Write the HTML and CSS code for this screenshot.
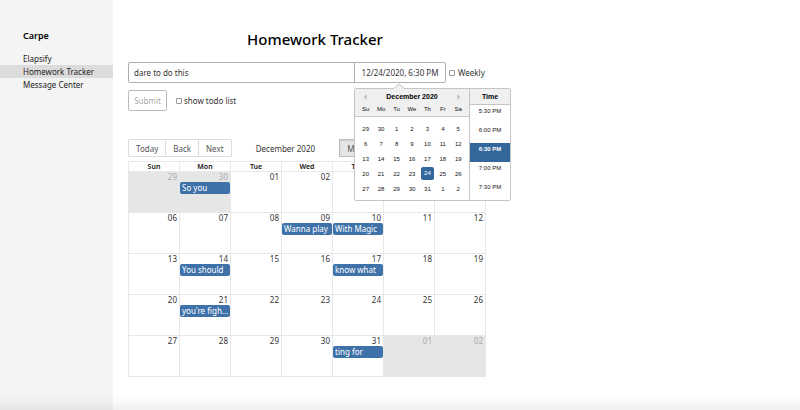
FILE: index.html
```
<!DOCTYPE html>
<html lang="en">
<head>
<meta charset="utf-8">
<meta name="viewport" content="width=device-width, initial-scale=1">
<title>Homework Tracker</title>
<link rel="stylesheet" href="styles.css">
</head>
<body>
<div class="app">
  <nav class="sidebar">
    <h2 class="brand">Carpe</h2>
    <a class="nav-link" href="#elapsify">Elapsify</a>
    <a class="nav-link active" href="#homework">Homework Tracker</a>
    <a class="nav-link" href="#messages">Message Center</a>
  </nav>
  <main class="main">
    <div class="column">
      <h1 class="title">Homework Tracker</h1>
      <form>
        <div class="fields">
          <input class="field task" type="text" aria-label="Assignment" value="dare to do this">
          <div class="date-wrap">
            <input class="field date" type="text" aria-label="Due date" value="12/24/2020, 6:30 PM">
            <div class="picker">
              <svg class="pointer" viewBox="0 0 12 6"><path d="M0 6 6 1l6 5" fill="#f0f0f0" stroke="#c4c4c4"/></svg>
              <div class="picker-days">
                <div class="picker-head">
                  <button type="button" class="arrow" aria-label="Previous month"><svg viewBox="0 0 4 6"><path d="M4 0v6L0 3z" fill="#ccc"/></svg></button>
                  <span class="picker-month">December 2020</span>
                  <button type="button" class="arrow" aria-label="Next month"><svg viewBox="0 0 4 6"><path d="M0 0v6l4-3z" fill="#ccc"/></svg></button>
                </div>
                <table class="days">
                  <thead><tr><th>Su</th><th>Mo</th><th>Tu</th><th>We</th><th>Th</th><th>Fr</th><th>Sa</th></tr></thead>
                  <tbody>
                    <tr><td>29</td><td>30</td><td>1</td><td>2</td><td>3</td><td>4</td><td>5</td></tr>
                    <tr><td>6</td><td>7</td><td>8</td><td>9</td><td>10</td><td>11</td><td>12</td></tr>
                    <tr><td>13</td><td>14</td><td>15</td><td>16</td><td>17</td><td>18</td><td>19</td></tr>
                    <tr><td>20</td><td>21</td><td>22</td><td>23</td><td><span class="chosen">24</span></td><td>25</td><td>26</td></tr>
                    <tr><td>27</td><td>28</td><td>29</td><td>30</td><td>31</td><td>1</td><td>2</td></tr>
                  </tbody>
                </table>
              </div>
              <div class="picker-times">
                <div class="time-head">Time</div>
                <ul class="times">
                  <li>5:30 PM</li>
                  <li>6:00 PM</li>
                  <li class="selected">6:30 PM</li>
                  <li>7:00 PM</li>
                  <li>7:30 PM</li>
                </ul>
              </div>
            </div>
          </div>
          <label class="check weekly"><input type="checkbox">Weekly</label>
        </div>
        <div class="actions">
          <button class="submit" type="submit" disabled>Submit</button>
          <label class="check"><input type="checkbox">show todo list</label>
        </div>
      </form>
      <div class="toolbar">
        <div class="group"><button type="button">Today</button><button type="button">Back</button><button type="button">Next</button></div>
        <span class="month-label">December 2020</span>
        <div class="group views"><button type="button" class="pressed">Month</button></div>
      </div>
      <table class="calendar">
        <thead><tr><th>Sun</th><th>Mon</th><th>Tue</th><th>Wed</th><th>Thu</th><th>Fri</th><th>Sat</th></tr></thead>
        <tbody>
          <tr><td class="off">29</td><td class="off">30<div class="event">So you</div></td><td>01</td><td>02</td><td></td><td></td><td></td></tr>
          <tr><td>06</td><td>07</td><td>08</td><td>09<div class="event">Wanna play</div></td><td>10<div class="event">With Magic</div></td><td>11</td><td>12</td></tr>
          <tr><td>13</td><td>14<div class="event">You should</div></td><td>15</td><td>16</td><td>17<div class="event">know what</div></td><td>18</td><td>19</td></tr>
          <tr><td>20</td><td>21<div class="event">you're figh...</div></td><td>22</td><td>23</td><td>24</td><td>25</td><td>26</td></tr>
          <tr><td>27</td><td>28</td><td>29</td><td>30</td><td>31<div class="event">ting for</div></td><td class="off">01</td><td class="off">02</td></tr>
        </tbody>
      </table>
    </div>
  </main>
</div>
</body>
</html>
```
FILE: styles.css
```
* { box-sizing: border-box; }

body {
  margin: 0;
  font: 8px/13px "Noto Sans", "Open Sans", sans-serif;
  color: #333;
  background: #fff;
}

button, input { font: inherit; color: inherit; margin: 0; }

.app { display: flex; min-height: 100vh; }

/* soft shade along the bottom of the window */
.app::after {
  content: "";
  position: fixed;
  inset: auto 0 0 0;
  height: 14px;
  background: linear-gradient(transparent, rgba(0, 0, 0, 0.06));
  pointer-events: none;
}

.sidebar {
  flex: 0 0 113px;
  padding-top: 29px;
  background: #f4f4f4;
}
.brand {
  margin: 0 0 9px;
  padding-left: 23px;
  font-size: 9px;
  line-height: 14px;
  font-weight: 600;
  color: #000;
}
.nav-link {
  display: block;
  padding-left: 23px;
  line-height: 13px;
  color: #222;
  text-decoration: none;
}
.nav-link.active { background: #dcdcdc; }

.main { flex: 1; padding: 28px 0 24px 15px; }
.column { width: 52%; min-width: 358px; }

.title {
  margin: 0 0 12px;
  padding-left: 16px;
  text-align: center;
  font-size: 15px;
  line-height: 22px;
  font-weight: 500;
  color: #000;
}

.fields { display: flex; align-items: center; }
.field {
  display: block;
  height: 21px;
  border: 1px solid #b0b0b0;
  background: #fff;
}
.task {
  flex: 0 0 227px;
  padding: 0 5px;
  border-radius: 2px 0 0 2px;
}
.date-wrap { position: relative; flex: 0 0 92px; margin-left: -1px; }
.date {
  width: 100%;
  padding: 0;
  text-align: center;
  border-radius: 0 2px 2px 0;
}

.check { display: flex; align-items: center; gap: 2px; }
.check input {
  appearance: none;
  width: 6px;
  height: 6px;
  border: 1px solid #999;
  border-radius: 1px;
  background: #fff;
}
.weekly { margin-left: 3px; gap: 3px; }

.actions { display: flex; align-items: center; gap: 9px; margin-top: 7px; }
.submit {
  width: 39px;
  height: 21px;
  padding: 0;
  border: 1px solid #bbb;
  border-radius: 2px;
  background: #fff;
  color: #aaa;
}

.toolbar {
  display: flex;
  justify-content: space-between;
  align-items: center;
  margin-top: 28px;
}
.group { display: flex; }
.views { width: 41%; }
.group button {
  height: 18px;
  padding: 0 7px;
  border: 1px solid #ddd;
  background: #fff;
  color: #555;
}
.group button + button { margin-left: -1px; }
.group button:first-child { border-radius: 2px 0 0 2px; }
.group button:last-child { border-radius: 0 2px 2px 0; }
.group .pressed {
  border-color: #bbb;
  border-radius: 2px;
  background: #e6e6e6;
  box-shadow: inset 0 1px 2px rgba(0, 0, 0, 0.12);
}

.calendar {
  width: 100%;
  height: 216px;
  margin-top: 4px;
  border-collapse: collapse;
  table-layout: fixed;
}
.calendar th, .calendar td { border: 1px solid #e8e8e8; padding: 0; }
.calendar th {
  height: 10px;
  line-height: 8px;
  font-size: 7px;
  font-weight: 600;
  color: #111;
}
.calendar td {
  height: 41px;
  padding-right: 2px;
  vertical-align: top;
  text-align: right;
  line-height: 10px;
}
.calendar .off { background: #e6e6e6; color: #aaa; }
.event {
  height: 12px;
  margin-right: -2px;
  padding: 0 2px;
  border-radius: 2px;
  background: #3f72a9;
  color: #fff;
  line-height: 12px;
  text-align: left;
  white-space: nowrap;
  overflow: hidden;
}

.picker {
  position: absolute;
  z-index: 2;
  top: 26px;
  left: 0;
  display: flex;
  border: 1px solid #c4c4c4;
  border-radius: 2px;
  background: #fff;
  color: #111;
  font: 6px/8px "Liberation Sans", Arial, sans-serif;
}
.pointer { position: absolute; top: -6px; left: 38px; width: 12px; height: 6px; }
.picker-days {
  width: 114px;
  background: linear-gradient(#f0f0f0 27px, #ccc 27px, #ccc 28px, #fff 28px);
}
.picker-head {
  display: flex;
  justify-content: space-between;
  align-items: center;
  height: 16px;
  padding: 0 8px;
}
.picker-month, .time-head { font-size: 7px; font-weight: bold; color: #000; }
.arrow { display: flex; padding: 0; border: 0; background: none; }
.arrow svg { width: 4px; height: 6px; }
.days { width: 108px; margin: 0 3px; border-collapse: collapse; table-layout: fixed; }
.days th, .days td { padding: 0; text-align: center; font-weight: normal; }
.days thead th { height: 8px; padding-bottom: 8px; }
.days td { height: 15px; }
.chosen {
  display: block;
  width: 13px;
  margin: 0 auto;
  border-radius: 2px;
  background: #34689c;
  color: #fff;
  line-height: 13px;
}
.picker-times { width: 41px; border-left: 1px solid #c4c4c4; text-align: center; }
.time-head {
  height: 16px;
  border-bottom: 1px solid #c4c4c4;
  background: #f0f0f0;
  line-height: 16px;
}
.times { height: 95px; margin: 0; padding: 0; list-style: none; overflow: hidden; }
.times li { height: 19px; line-height: 13px; }
.times .selected { background: #34689c; color: #fff; font-weight: bold; }
```
